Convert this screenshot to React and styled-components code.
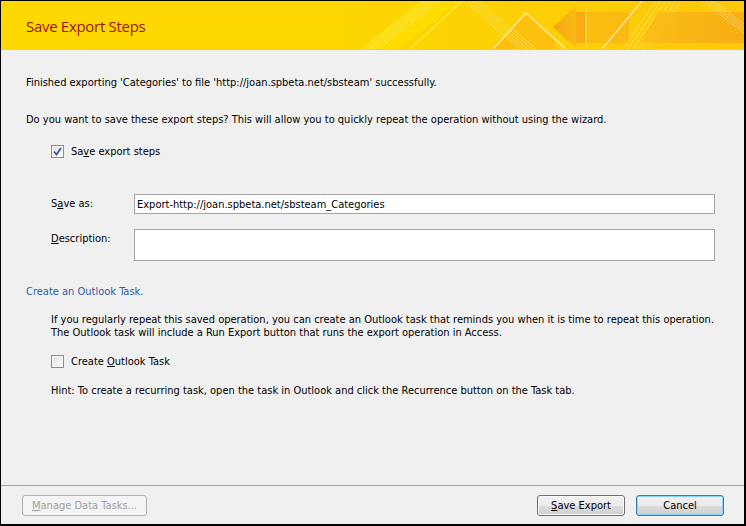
import React from "react";
import styled, { createGlobalStyle } from "styled-components";

const GlobalStyle = createGlobalStyle`
  html, body {
    margin: 0;
    padding: 0;
    background: #f0f0f0;
  }
  * {
    box-sizing: border-box;
  }
`;

export default function App() {
  return (
    <>
      <GlobalStyle />
      <Window>
        <Header>
          <Title>Save Export Steps</Title>
          <HeaderArt />
        </Header>
        <Body>
          <Para>
            Finished exporting 'Categories' to file 'http://joan.spbeta.net/sbsteam' successfully.
          </Para>
          <Para $top={24}>
            Do you want to save these export steps? This will allow you to quickly repeat the operation
            without using the wizard.
          </Para>
          <CheckRow $top={19}>
            <CheckBox checked />
            <span>
              Sa<u>v</u>e export steps
            </span>
          </CheckRow>

          <FieldRow $top={36}>
            <FieldLabel>
              S<u>a</u>ve as:
            </FieldLabel>
            <TextInput defaultValue="Export-http://joan.spbeta.net/sbsteam_Categories" />
          </FieldRow>
          <FieldRow $top={15}>
            <FieldLabel>
              <u>D</u>escription:
            </FieldLabel>
            <TextArea />
          </FieldRow>

          <SectionLink $top={24}>Create an Outlook Task.</SectionLink>
          <Indented $top={15}>
            If you regularly repeat this saved operation, you can create an Outlook task that reminds you
            when it is time to repeat this operation.
            <br />
            The Outlook task will include a Run Export button that runs the export operation in Access.
          </Indented>
          <CheckRow $top={16}>
            <CheckBox />
            <span>
              Create <u>O</u>utlook Task
            </span>
          </CheckRow>
          <Indented $top={16}>
            Hint: To create a recurring task, open the task in Outlook and click the Recurrence button on the
            Task tab.
          </Indented>
        </Body>
        <Footer>
          <Button $w={125} disabled>
            <u>M</u>anage Data Tasks...
          </Button>
          <Spacer />
          <Button $w={88}>
            <u>S</u>ave Export
          </Button>
          <Button $w={88} $focus>
            Cancel
          </Button>
        </Footer>
      </Window>
    </>
  );
}

function CheckBox({ checked }) {
  return (
    <Box>
      {checked && (
        <svg width="9" height="9" viewBox="0 0 9 9">
          <path d="M1 4.5 L3.5 7.5 L8 1" fill="none" stroke="#3b53a0" strokeWidth="1.8" />
        </svg>
      )}
    </Box>
  );
}

function HeaderArt() {
  return (
    <Art width="404" height="48" viewBox="0 0 404 48">
      <defs>
        <linearGradient id="orangeFade" x1="0" y1="0" x2="1" y2="0">
          <stop offset="0" stopColor="#f6a012" />
          <stop offset="1" stopColor="#f9b916" />
        </linearGradient>
        <linearGradient id="rightBand" x1="0" y1="0" x2="1" y2="0">
          <stop offset="0" stopColor="#fabb18" />
          <stop offset="1" stopColor="#f7a916" />
        </linearGradient>
      </defs>
      {/* light glow band on the left */}
      <polygon points="20,48 60,48 120,0 80,0" fill="#ffe300" opacity="0.5" />
      {/* stripe group A */}
      {[0, 4, 8, 12, 16].map((d) => (
        <line key={"a" + d} x1={22 + d} y1="48" x2={84 + d} y2="0" stroke="#fff3a0" strokeWidth="1" opacity="0.5" />
      ))}
      <line x1="70" y1="48" x2="122" y2="0" stroke="#ffec3a" strokeWidth="1.5" />
      {/* darker wedge behind peak */}
      <polygon points="150,48 186,12 215,40 215,48" fill="#f8b812" opacity="0.6" />
      {/* stripe group B */}
      {[0, 4, 8, 12, 16].map((d) => (
        <line key={"b" + d} x1={124 + d} y1="0" x2={180 + d} y2="48" stroke="#fff0a0" strokeWidth="1" opacity="0.5" />
      ))}
      {/* white inverted V */}
      <polyline points="153,48 186,12 226,48" fill="none" stroke="#ffe89a" strokeWidth="1.6" />
      {/* arrow */}
      <polygon points="213,26 236,5 236,47" fill="url(#orangeFade)" opacity="0.9" />
      <rect x="236" y="11" width="10" height="31" fill="#f7a814" opacity="0.9" />
      <line x1="246" y1="6" x2="246" y2="47" stroke="#fbd24a" strokeWidth="1.2" />
      <rect x="247" y="11" width="42" height="31" fill="#f9b416" opacity="0.75" />
      <line x1="262" y1="48" x2="302" y2="0" stroke="#ffeab0" strokeWidth="1.2" />
      {/* stripe group C */}
      {[0, 5, 10, 15, 20, 25].map((d) => (
        <line key={"c" + d} x1={283 + d} y1="48" x2={316 + d} y2="0" stroke="#fff0a0" strokeWidth="1" opacity="0.5" />
      ))}
      {/* right orange band */}
      <polygon points="318,11 404,11 404,42 300,42" fill="url(#rightBand)" opacity="0.85" />
      {[0, 4, 8, 12].map((d) => (
        <line key={"d" + d} x1={362 + d} y1="0" x2={404 + d} y2="32" stroke="#ffe9a0" strokeWidth="1" opacity="0.55" />
      ))}
    </Art>
  );
}

const Window = styled.div`
  width: 746px;
  height: 526px;
  display: flex;
  flex-direction: column;
  background: #f0f0f0;
  border-top: 1px solid #000;
  border-left: 1px solid #000;
  border-right: 2px solid #000;
  border-bottom: 2px solid #000;
  font-family: "DejaVu Sans Condensed", "DejaVu Sans", sans-serif;
  font-stretch: condensed;
  font-size: 11px;
  line-height: 13px;
  color: #000;
  overflow: hidden;
`;

const Header = styled.div`
  display: flex;
  align-items: center;
  height: 49px;
  flex-shrink: 0;
  background: linear-gradient(90deg, #ffd900 0%, #fed600 45%, #fcc80a 100%);
  border-bottom: 1px solid #a9cfee;
`;

const Title = styled.div`
  flex: 1;
  padding-left: 25px;
  padding-top: 2px;
  font-family: "Open Sans", "Liberation Sans", sans-serif;
  font-stretch: normal;
  font-size: 15px;
  font-weight: 400;
  color: #9b1416;
  letter-spacing: -0.3px;
`;

const Art = styled.svg`
  display: block;
  flex-shrink: 0;
`;

const Body = styled.div`
  flex: 1;
  display: flex;
  flex-direction: column;
  padding: 26px 29px 0 25px;
`;

const Para = styled.div`
  margin-top: ${(p) => p.$top || 0}px;
  white-space: nowrap;
`;

const Indented = styled(Para)`
  margin-left: 25px;
`;

const CheckRow = styled.label`
  display: flex;
  align-items: center;
  gap: 7px;
  margin-left: 25px;
  margin-top: ${(p) => p.$top || 0}px;
  height: 13px;
`;

const Box = styled.span`
  width: 13px;
  height: 13px;
  display: flex;
  align-items: center;
  justify-content: center;
  border: 1px solid #8f8f8f;
  background: linear-gradient(135deg, #dcdcdc 0%, #f4f4f4 60%, #ffffff 100%);
  box-shadow: inset 0 0 0 1px #f4f4f4;
`;

const FieldRow = styled.div`
  display: flex;
  align-items: flex-start;
  margin-left: 25px;
  margin-top: ${(p) => p.$top || 0}px;
`;

const FieldLabel = styled.div`
  width: 83px;
  padding-top: 3px;
`;

const TextInput = styled.input`
  flex: 1;
  height: 20px;
  border: 1px solid #a5a5a5;
  background: #fff;
  padding: 0 2px;
  font: inherit;
  font-stretch: condensed;
  color: #000;
  outline: none;
`;

const TextArea = styled.textarea`
  flex: 1;
  height: 32px;
  border: 1px solid #a5a5a5;
  background: #fff;
  resize: none;
  font: inherit;
  outline: none;
`;

const SectionLink = styled(Para)`
  color: #2a5ea8;
`;

const Footer = styled.div`
  display: flex;
  align-items: center;
  gap: 11px;
  flex-shrink: 0;
  border-top: 1px solid #a0a0a0;
  padding: 9px 20px 8px 21px;
`;

const Spacer = styled.div`
  flex: 1;
`;

const Button = styled.button`
  width: ${(p) => p.$w}px;
  height: 21px;
  padding: 0;
  font: inherit;
  font-stretch: condensed;
  color: #000;
  border-radius: 3px;
  border: 1px solid ${(p) => (p.$focus ? "#3c7fb1" : "#707070")};
  background: linear-gradient(180deg, #f2f2f2 0%, #ebebeb 50%, #dddddd 51%, #cfcfcf 100%);
  box-shadow: inset 0 0 0 1px ${(p) => (p.$focus ? "#8ad2f5" : "#fcfcfc")};

  &:disabled {
    color: #a0a0a0;
    border-color: #adb2b5;
    background: #f4f4f4;
    box-shadow: none;
  }
`;
